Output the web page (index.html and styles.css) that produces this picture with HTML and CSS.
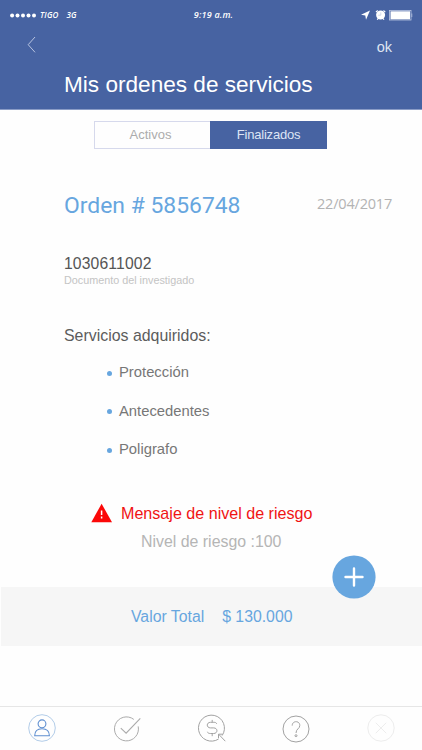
FILE: index.html
```html
<!DOCTYPE html>
<html lang="es">
<head>
    <meta charset="UTF-8">
    <meta name="viewport" content="width=device-width, initial-scale=1.0">
    <title>Mis ordenes de servicios</title>
    <link rel="stylesheet" href="styles.css">
</head>
<body>
    <header class="header">
        <div class="status">
            <div class="carrier">
                <svg class="signal" width="27" height="5" viewBox="0 0 27 5" fill="#fff">
                    <circle cx="2.1" cy="2.5" r="2"/><circle cx="7.5" cy="2.5" r="2"/><circle cx="13" cy="2.5" r="2"/><circle cx="18.5" cy="2.5" r="2"/><circle cx="24" cy="2.5" r="2"/>
                </svg>
                <span class="tigo">TIGO</span>
                <span>3G</span>
            </div>
            <span class="time">9:19 a.m.</span>
            <svg class="indicators" width="52" height="12" viewBox="0 0 52 12">
                <path d="M9 1.5L0 5.8l4.3.8.7 4.2z" fill="#fff"/>
                <circle cx="19.6" cy="6" r="4.5" fill="#fff"/>
                <path d="M14.9 3.2l1.800-1.700M24.300 3.200l-1.800-1.700M17 9.600l-.8 1.100M22.200 9.600l.8 1.100" stroke="#fff" stroke-width="1.1"/>
                <path d="M19.8 3.4v2.8h-2.6" stroke="#b4c1de" stroke-width=".6" fill="none"/>
                <rect x="28.5" y="1.5" width="21.5" height="9.5" fill="none" stroke="#b9c5e2" stroke-width=".8"/>
                <rect x="29.5" y="2.3" width="19.5" height="8" fill="#fff"/>
                <path d="M50.8 4.5v3.6" stroke="#b9c5e2" stroke-width=".8"/>
            </svg>
        </div>
        <div class="nav">
            <svg class="back" width="10" height="18" viewBox="0 0 10 18" fill="none" stroke="#c4cee6" stroke-width=".9">
                <path d="M8 1L1.2 8.7 8 16.3"/>
            </svg>
            <span class="ok">ok</span>
        </div>
        <h1 class="title">Mis ordenes de servicios</h1>
    </header>

    <div class="tabs">
        <span class="tab">Activos</span>
        <span class="tab active">Finalizados</span>
    </div>

    <main class="order">
        <div class="order-head">
            <h2 class="number">Orden # 5856748</h2>
            <span class="date">22/04/2017</span>
        </div>
        <p class="document">1030611002</p>
        <p class="document-label">Documento del investigado</p>

        <h3 class="services-title">Servicios adquiridos:</h3>
        <ul class="services">
            <li>Protección</li>
            <li>Antecedentes</li>
            <li>Poligrafo</li>
        </ul>

        <div class="risk">
            <svg width="22" height="20" viewBox="0 0 22 20">
                <path d="M10.6.8L21 19.2H.3z" fill="#fb0808"/>
                <path d="M10.6 7.5v4.6M10.6 13.6v2" stroke="#fff" stroke-width="1.5"/>
            </svg>
            <span class="risk-text">Mensaje de nivel de riesgo</span>
        </div>
        <p class="risk-level">Nivel de riesgo :100</p>
    </main>

    <div class="total">
        <span class="total-label">Valor Total</span>
        <span class="total-value">$ 130.000</span>
        <svg class="add" width="44" height="44" viewBox="0 0 44 44">
            <circle cx="22" cy="22" r="21.6" fill="#67a6df"/>
            <path d="M22 13.5v17M13.5 22h17" stroke="#fff" stroke-width="2.4" stroke-linecap="round"/>
        </svg>
    </div>

    <footer class="menu">
        <svg viewBox="0 0 30 30" fill="none" stroke="#5f8fd0">
            <circle cx="15" cy="15" r="13.3" stroke="#b3cde9"/>
            <circle cx="15" cy="10.8" r="3.9" stroke-width="1.1"/>
            <path d="M7.7 22.7c0-4.5 3-7 7.3-7s7.4 2.5 7.4 7z" stroke-width="1.1"/>
        </svg>
        <svg viewBox="0 0 30 30" fill="none" stroke="#ababab">
            <path d="M21.8 6.4A12 12 0 1 0 26.2 13.4"/>
            <path d="M8.8 15.2l5.3 5L28.3 5.4" stroke-width="1.1"/>
        </svg>
        <svg viewBox="0 0 30 30" fill="none" stroke="#a2a2a2">
            <path d="M25.1 22.6A13 13 0 1 0 21.6 26"/>
            <path d="M19.7 10.8c-.4-1.2-1.5-1.5-2.8-1.5h-3.4c-4.3 0-4.3 5.6 0 5.6h3.2c4.3 0 4.3 5.6 0 5.6h-3.4c-1.5 0-2.6-.5-2.9-1.7M15.2 6.9v2.4M15.2 20.5v2.7"/>
            <path d="M28.3 28.2l-6.6-6.9M21.5 25.2v-4h4"/>
        </svg>
        <svg viewBox="0 0 30 30" fill="none" stroke="#a2a2a2">
            <circle cx="15" cy="16" r="13"/>
            <path d="M11.2 12.6c0-5.2 7.6-5.2 7.6-.2 0 3.5-3.8 3.3-3.8 7.6"/>
            <circle cx="15" cy="22.7" r="1"/>
        </svg>
        <svg viewBox="0 0 30 30" fill="none" stroke="#ededed">
            <circle cx="15" cy="15" r="13.2"/>
            <path d="M9.8 9.8l10.4 10.4M20.2 9.8L9.8 20.2"/>
        </svg>
    </footer>
</body>
</html>
```

FILE: styles.css
```css
* {
    box-sizing: border-box;
}
body {
    margin: 0;
    height: 750px;
    display: flex;
    flex-direction: column;
    background: #fefefe;
    font-family: "Liberation Sans", Arial, sans-serif;
    overflow: hidden;
}
h1, h2, h3, p, ul {
    margin: 0;
    padding: 0;
    font-weight: 400;
}
svg {
    display: block;
    flex: none;
}

.header {
    height: 110px;
    background: #4763a2;
    border-bottom: 1px solid #8a9cc6;
    color: #fff;
}
.status {
    height: 30px;
    padding: 0 9px 0 10px;
    display: grid;
    grid-template-columns: 1fr auto 1fr;
    align-items: center;
    font: italic 600 8px/12px "Open Sans", sans-serif;
}
.carrier {
    display: flex;
    align-items: center;
}
.tigo {
    margin: 0 8px 0 3px;
    letter-spacing: .2px;
}
.time {
    padding-left: 4px;
    font-size: 9px;
    letter-spacing: .2px;
}
.indicators {
    justify-self: end;
}
.nav {
    height: 35px;
    padding: 6px 30px 0 27px;
    display: flex;
    justify-content: space-between;
    align-items: flex-start;
}
.ok {
    font-size: 14.5px;
    line-height: 23px;
    color: #dfe5f2;
}
.title {
    padding-left: 64px;
    font-size: 22.6px;
    line-height: 40px;
}

.tabs {
    display: flex;
    width: 233px;
    height: 28px;
    margin: 11px 0 0 94px;
    border: 1px solid #d6d9ec;
}
.tab {
    flex: 1;
    padding-right: 5px;
    text-align: center;
    font-size: 13px;
    line-height: 26px;
    color: #acacac;
}
.active {
    flex: 0 0 117px;
    margin: -1px;
    padding-right: 0;
    line-height: 27px;
    letter-spacing: -.2px;
    background: #4763a2;
    color: #dde5f5;
}

.order {
    height: 438px;
    padding: 42px 30px 0 64px;
}
.order-head {
    display: flex;
    justify-content: space-between;
    align-items: center;
}
.number {
    font: 400 22.9px/30px Roboto, sans-serif;
    color: #67a6df;
}
.date {
    margin-top: -4px;
    font: 14.5px/26px "Open Sans", sans-serif;
    letter-spacing: -.2px;
    color: #b3b3b3;
}
.document {
    margin-top: 33px;
    font-size: 15.7px;
    line-height: 20px;
    letter-spacing: .15px;
    color: #555;
}
.document-label {
    font-size: 10.8px;
    line-height: 13px;
    color: #c4c4c4;
}
.services-title {
    margin-top: 39px;
    font-size: 15.9px;
    line-height: 20px;
    color: #5c5c5c;
}
.services {
    margin-top: 7px;
    padding-left: 43px;
    list-style: none;
}
.services li {
    display: flex;
    align-items: center;
    height: 38.5px;
    font-size: 14.8px;
    color: #777;
}
.services li::before {
    content: "";
    width: 5px;
    height: 5px;
    margin: 2px 7px 0 0;
    border-radius: 50%;
    background: #67a6df;
}
.risk {
    display: flex;
    align-items: center;
    gap: 8px;
    margin: 34px 0 0 27px;
    height: 22px;
}
.risk svg {
    margin-top: -2px;
}
.risk-text {
    font-size: 16.1px;
    color: #f01414;
}
.risk-level {
    margin: 7px 0 0 77px;
    font-size: 15.9px;
    line-height: 20px;
    color: #b5b5b5;
}

.total {
    position: relative;
    display: flex;
    gap: 18px;
    height: 59px;
    margin-left: 1px;
    padding-left: 130px;
    background: #f6f6f6;
    font-size: 15.8px;
    line-height: 59px;
    color: #67a6df;
}
.add {
    position: absolute;
    top: -32px;
    right: 46px;
}

.menu {
    display: flex;
    justify-content: space-between;
    height: 44px;
    margin-top: auto;
    padding: 6px 26px 0 27px;
    border-top: 1px solid #e6e6e6;
}
.menu svg {
    width: 30px;
    height: 30px;
}
```
